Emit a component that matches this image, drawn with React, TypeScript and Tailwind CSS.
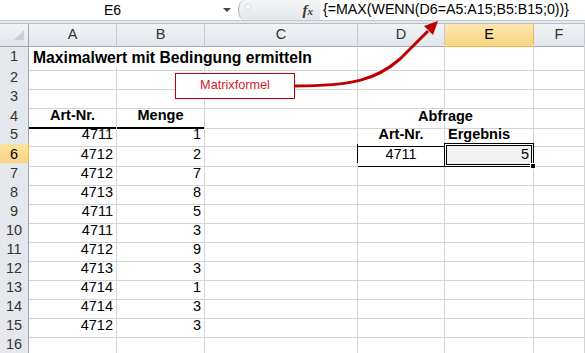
import React from 'react';

const data: [number, number][] = [
  [4711, 1],
  [4712, 2],
  [4712, 7],
  [4713, 8],
  [4711, 5],
  [4711, 3],
  [4712, 9],
  [4713, 3],
  [4714, 1],
  [4714, 3],
  [4712, 3],
];

const rowGrid = 'grid grid-cols-[29px_88px_88px_153px_87px_89px_1fr]';
const cell = 'flex items-center px-[3px] border-r border-b border-[#d4d4d4] whitespace-nowrap';

function RowHead({ n, active }: { n: number; active?: boolean }) {
  return (
    <div
      className={
        active
          ? 'flex items-center justify-center border-r border-b border-[#f0b24a] bg-gradient-to-b from-[#fde3a0] to-[#f9d27e] text-black'
          : 'flex items-center justify-center border-r border-b border-r-[#9ea7b3] border-b-[#c9ced5] bg-[#e4e8ed] text-[#333]'
      }
    >
      {n}
    </div>
  );
}

function ColHead({ label, active }: { label: string; active?: boolean }) {
  return (
    <div
      className={
        active
          ? 'flex items-center justify-center border-r border-b border-[#f0b24a] bg-gradient-to-b from-[#fde7ae] to-[#f9d584] text-black'
          : 'flex items-center justify-center border-r border-b border-r-[#c5cad1] border-b-[#9ea7b3] bg-gradient-to-b from-[#f1f3f6] to-[#e2e6eb] text-[#333]'
      }
    >
      {label}
    </div>
  );
}

export default function App() {
  return (
    <div className="relative w-[585px] h-[353px] overflow-hidden bg-white font-['Liberation_Sans',Arial,sans-serif] text-[14.5px] text-black">
      {/* Formula bar */}
      <div className="flex h-[21px] border-b border-[#c2c8d0]">
        <div className="flex w-[238px] items-center bg-white">
          <span className="flex-1 text-center text-[14px] pl-[2px]">E6</span>
          <svg width="8" height="5" viewBox="0 0 8 5" className="mr-[7px]">
            <path d="M0 0 L8 0 L4 4 Z" fill="#444" />
          </svg>
        </div>
        <div className="relative flex w-[82px] items-center justify-end border-l border-[#a9b0b9] rounded-tl-[6px_10px] rounded-bl-[6px_10px] bg-gradient-to-b from-[#f4f5f7] to-[#e4e7eb] pr-[7px]">
          <svg width="8" height="8" viewBox="0 0 8 8" className="absolute left-[5px] top-[3px]">
            <circle cx="4" cy="4" r="3" fill="#fbfbfc" stroke="#d5d9de" />
          </svg>
          <span className="font-['Liberation_Serif',serif] italic font-bold text-[15px] text-[#3a3a3a] leading-none">
            f<span className="text-[11px]">x</span>
          </span>
        </div>
        <div className="flex flex-1 items-center bg-white pl-[3px] text-[14.2px] whitespace-nowrap">
          {'{=MAX(WENN(D6=A5:A15;B5:B15;0))}'}
        </div>
      </div>
      <div className="h-[2px] bg-[#e6e9ed]" />

      {/* Column headers */}
      <div className={`${rowGrid} h-[21px] border-t border-[#b7bec7]`}>
        <div className="relative border-r border-b border-r-[#9ea7b3] border-b-[#9ea7b3] bg-gradient-to-b from-[#f1f3f6] to-[#e2e6eb]">
          <svg width="10" height="10" viewBox="0 0 10 10" className="absolute left-[14px] top-[6px]">
            <path d="M10 0 L10 10 L0 10 Z" fill="#c9cfd6" />
          </svg>
        </div>
        <ColHead label="A" />
        <ColHead label="B" />
        <ColHead label="C" />
        <ColHead label="D" />
        <ColHead label="E" active />
        <ColHead label="F" />
      </div>

      {/* Row 1 */}
      <div className={`${rowGrid} h-[23px]`}>
        <RowHead n={1} />
        <div className={`${cell} col-span-3 pl-[4px] pt-[2px] font-bold text-[15.7px]`}>
          Maximalwert mit Bedingung ermitteln
        </div>
        <div className={cell} />
        <div className={cell} />
        <div className={cell} />
      </div>

      {/* Rows 2-3 */}
      {[2, 3].map((n) => (
        <div key={n} className={`${rowGrid} h-[19px]`}>
          <RowHead n={n} />
          <div className={cell} />
          <div className={cell} />
          <div className={cell} />
          <div className={cell} />
          <div className={cell} />
          <div className={cell} />
        </div>
      ))}

      {/* Row 4 */}
      <div className={`${rowGrid} h-[19px]`}>
        <RowHead n={4} />
        <div className={`${cell} justify-center font-bold border-b-2 border-b-black`}>Art-Nr.</div>
        <div className={`${cell} justify-center font-bold border-b-2 border-b-black`}>Menge</div>
        <div className={cell} />
        <div className={`${cell} col-span-2 justify-center font-bold`}>Abfrage</div>
        <div className={cell} />
      </div>

      {/* Rows 5-15 */}
      {data.map(([art, menge], i) => {
        const n = i + 5;
        return (
          <div key={n} className={`${rowGrid} ${n === 5 ? 'h-[20px]' : 'h-[19px]'}`}>
            <RowHead n={n} active={n === 6} />
            <div className={`${cell} justify-end`}>{art}</div>
            <div className={`${cell} justify-end`}>{menge}</div>
            <div className={`${cell} ${n === 6 ? 'border-r-black' : ''}`} />
            {n === 5 && (
              <>
                <div className={`${cell} justify-center font-bold border-b-black`}>Art-Nr.</div>
                <div className={`${cell} font-bold border-b-black`}>Ergebnis</div>
              </>
            )}
            {n === 6 && (
              <>
                <div className={`${cell} justify-center border-r-black border-b-black`}>4711</div>
                <div className={`${cell} relative justify-end bg-[#f2f2f2] border-r-black border-b-black`}>
                  <span className="pr-[1px]">5</span>
                  <div className="absolute -left-px -top-px -right-px -bottom-px border border-black shadow-[inset_0_0_0_1px_#fff,inset_0_0_0_2px_#000]" />
                  <div className="absolute -right-[3px] -bottom-[3px] w-[6px] h-[6px] bg-black border border-white" />
                </div>
              </>
            )}
            {n !== 5 && n !== 6 && (
              <>
                <div className={cell} />
                <div className={cell} />
              </>
            )}
            <div className={cell} />
          </div>
        );
      })}

      {/* Row 16 */}
      <div className={`${rowGrid} h-[19px]`}>
        <RowHead n={16} />
        <div className={cell} />
        <div className={cell} />
        <div className={cell} />
        <div className={cell} />
        <div className={cell} />
        <div className={cell} />
      </div>

      {/* Callout box */}
      <div className="absolute left-[175px] top-[73px] flex h-[26px] w-[120px] items-center justify-center border border-[#c00000] bg-white text-[12.7px] text-[#d21c2c]">
        Matrixformel
      </div>

      {/* Arrow */}
      <svg className="pointer-events-none absolute left-0 top-0" width="585" height="353" viewBox="0 0 585 353">
        <path d="M294 86 C352 86 376 80 400 59 L428 31" fill="none" stroke="#c00000" strokeWidth="3" />
        <path d="M438 21 L433 35 L424 26 Z" fill="#c00000" />
      </svg>
    </div>
  );
}
